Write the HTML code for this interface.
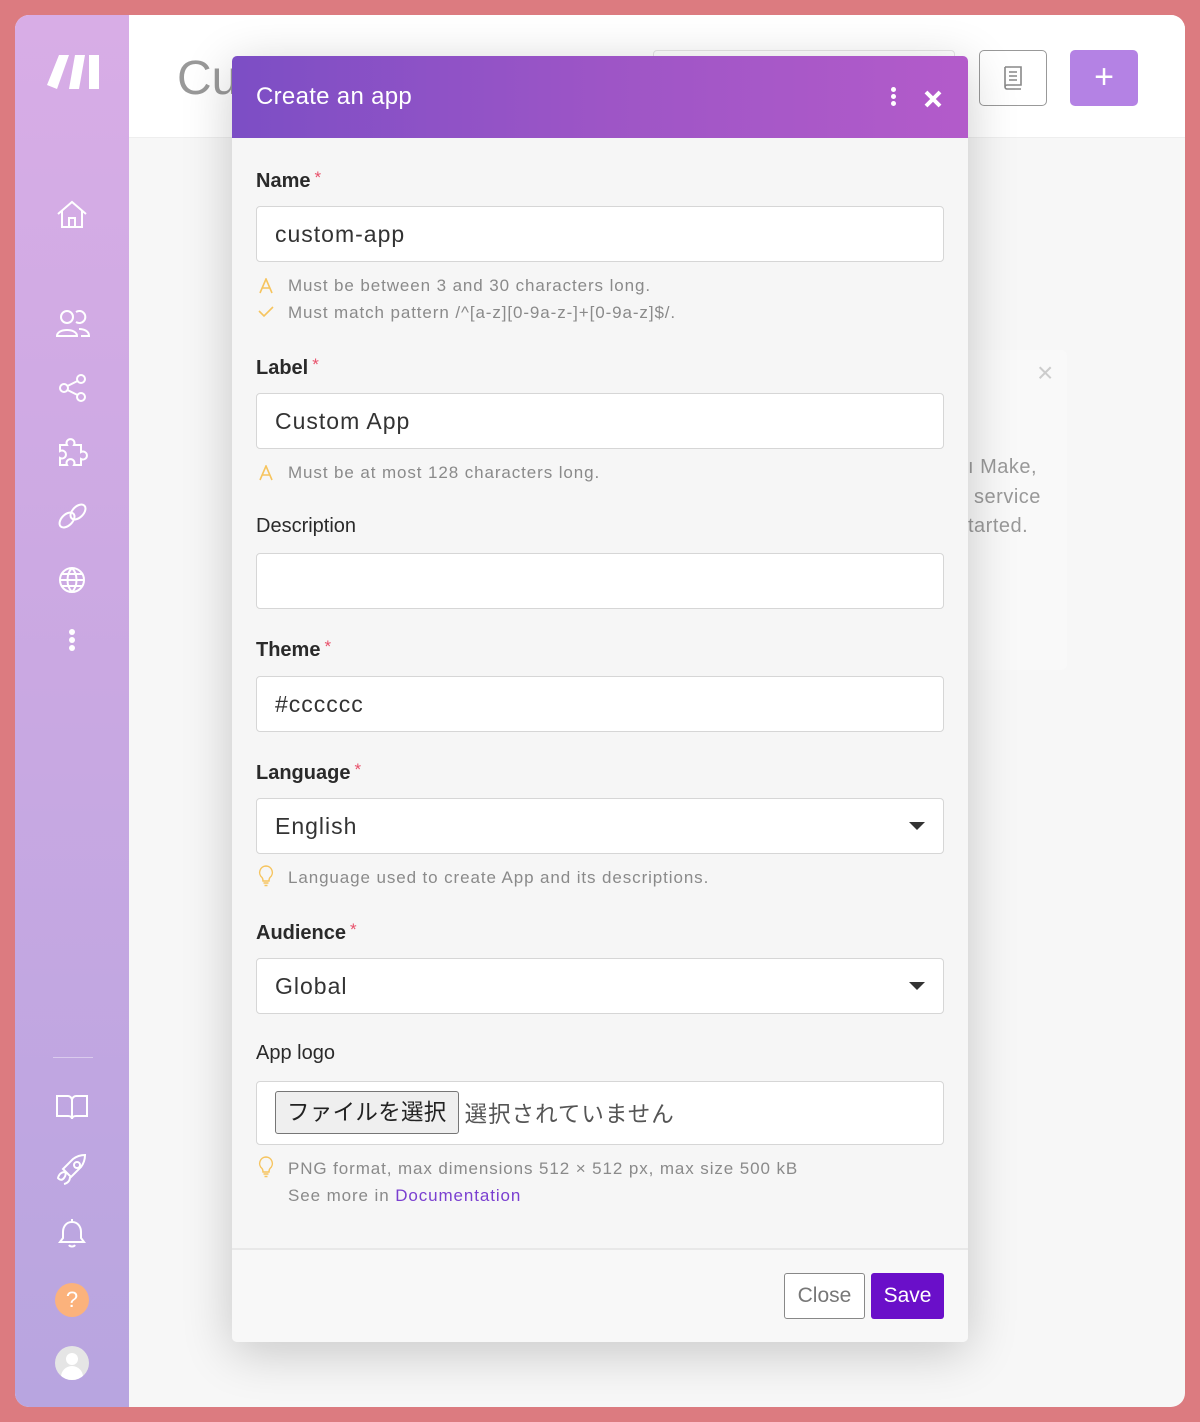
<!DOCTYPE html>
<html><head><meta charset="utf-8"><style>
*{box-sizing:border-box;margin:0;padding:0}
body{width:1200px;height:1422px;background:#dc7b80;font-family:"Liberation Sans","Noto Sans CJK JP",sans-serif;position:relative;overflow:hidden}
.win{position:absolute;left:15px;top:15px;width:1170px;height:1392px;border-radius:14px;overflow:hidden;background:#f7f7f7}
.side{position:absolute;left:0;top:0;width:114px;height:100%;background:linear-gradient(180deg,#d8ade6 0%,#c9a8e2 50%,#b8a5e0 100%)}
.hdr{position:absolute;left:114px;top:0;right:0;height:123px;background:#fff;border-bottom:1px solid #eee}
.ic{position:absolute;left:40px}
.a{position:absolute}
.modal{position:absolute;left:232px;top:56px;width:736px;height:1286px;background:#f6f6f6;border-radius:5px;box-shadow:0 10px 50px rgba(0,0,0,.2);overflow:hidden}
.mh{position:absolute;left:0;top:0;width:100%;height:82px;background:linear-gradient(90deg,#7c4ec5,#9d55c6 50%,#b35bca)}
.lbl{position:absolute;left:24px;font-size:20px;color:#2a2a2a;font-weight:bold}
.lbl.n{font-weight:normal}
.lbl span{color:#e8506a;font-weight:normal;font-size:17px;vertical-align:4px;margin-left:4px}
.inp{position:absolute;left:24px;width:688px;height:56px;background:#fff;border:1px solid #d6d6d6;border-radius:4px;font-size:23px;color:#333;padding-left:18px;line-height:54px;letter-spacing:1px}
.hint{position:absolute;left:56px;font-size:17px;color:#8a8a8a;letter-spacing:.9px}
.hi{position:absolute;left:26px}
.car{position:absolute;right:18px;top:23px;width:0;height:0;border-left:8px solid transparent;border-right:8px solid transparent;border-top:8px solid #333}
</style></head><body>
<div class="win">
 <div class="side">
  <svg class="a" style="left:30px;top:38px" width="56" height="40" viewBox="0 0 56 40"><path d="M14 2h10L12 36 2 32z" fill="#fff"/><path d="M30 2h10l-6 34H24z" fill="#fff"/><path d="M44 2h10v34H44z" fill="#fff"/></svg>
  <svg class="ic" style="top:184px" width="34" height="32" viewBox="0 0 34 32" fill="none" stroke="#fff" stroke-width="2"><path d="M3 15L17 3l14 12M7 12v16h20V12M14 28v-9h6v9"/></svg>
  <svg class="ic" style="top:294px" width="36" height="32" viewBox="0 0 36 32" fill="none" stroke="#fff" stroke-width="2"><circle cx="12" cy="8" r="6"/><path d="M2 27c0-8 20-8 20 0H2z"/><path d="M21 3a6 6 0 1 1 0 10M24 20c5 0 10 2 10 7h-8"/></svg>
  <svg class="ic" style="top:358px" width="34" height="30" viewBox="0 0 34 30" fill="none" stroke="#fff" stroke-width="2"><circle cx="26" cy="6" r="4"/><circle cx="9" cy="15" r="4"/><circle cx="26" cy="24" r="4"/><path d="M12.5 13l10-5M12.5 17l10 5"/></svg>
  <svg class="ic" style="top:420px" width="34" height="34" viewBox="0 0 34 34" fill="none" stroke="#fff" stroke-width="2"><path d="M5 10h7a4 4 0 1 1 7 0h7v7a4 4 0 1 1 0 7v6h-7a4 4 0 1 0-7 0H5v-7a4 4 0 1 0 0-7z"/></svg>
  <svg class="ic" style="top:486px" width="36" height="30" viewBox="0 0 36 30" fill="none" stroke="#fff" stroke-width="2"><ellipse cx="12" cy="19" rx="9" ry="5.5" transform="rotate(-45 12 19)"/><ellipse cx="23" cy="11" rx="9" ry="5.5" transform="rotate(-45 23 11)"/></svg>
  <svg class="ic" style="top:548px" width="34" height="34" viewBox="0 0 34 34" fill="none" stroke="#fff" stroke-width="2"><circle cx="17" cy="17" r="12"/><path d="M5 17h24M17 5c-6 6-6 18 0 24M17 5c6 6 6 18 0 24M7 11h20M7 23h20"/></svg>
  <div class="a" style="left:54px;top:614px;width:6px;height:6px;border-radius:3px;background:#fff;box-shadow:0 8px 0 #fff,0 16px 0 #fff"></div>
  <div class="a" style="left:38px;top:1042px;width:40px;height:1px;background:rgba(255,255,255,.4)"></div>
  <svg class="ic" style="top:1078px" width="34" height="28" viewBox="0 0 34 28" fill="none" stroke="#fff" stroke-width="2"><path d="M2 3h11c2 0 4 2 4 4v19c0-2-2-3-4-3H2zM32 3H21c-2 0-4 2-4 4v19c0-2 2-3 4-3h11z"/></svg>
  <svg class="ic" style="top:1138px" width="34" height="34" viewBox="0 0 34 34" fill="none" stroke="#fff" stroke-width="2"><path d="M12 20l-4-4 10-10c4-3 9-4 12-4 0 3-1 8-4 12L16 24z"/><circle cx="22" cy="12" r="3"/><path d="M10 19c-6 0-7 6-7 6s3 4 6 0 1-6 1-6zM15 24c0 6-6 7-6 7"/></svg>
  <svg class="ic" style="top:1203px" width="34" height="32" viewBox="0 0 34 32" fill="none" stroke="#fff" stroke-width="2"><path d="M17 4c-6 0-9 5-9 10v6l-3 4h24l-3-4v-6c0-5-3-10-9-10zM14 27c1 2 5 2 6 0M17 1v3"/></svg>
  <div class="a" style="left:40px;top:1268px;width:34px;height:34px;border-radius:50%;background:#fbb27c;color:#fff;font-size:22px;text-align:center;line-height:34px">?</div>
  <div class="a" style="left:40px;top:1331px;width:34px;height:34px;border-radius:50%;background:#e5e5e5;overflow:hidden"><div class="a" style="left:11px;top:7px;width:12px;height:12px;border-radius:50%;background:#fff"></div><div class="a" style="left:6px;top:20px;width:22px;height:18px;border-radius:11px 11px 0 0;background:#fff"></div></div>
 </div>
 <div class="hdr">
  <div class="a" style="left:48px;top:36px;font-size:48px;color:#999">Cu</div>
  <div class="a" style="left:524px;top:35px;width:302px;height:56px;border:1px solid #e5e5e5;border-radius:4px"></div>
  <div class="a" style="left:850px;top:35px;width:68px;height:56px;border:1px solid #999;border-radius:5px"></div>
  <svg class="a" style="left:874px;top:50px" width="20" height="26" viewBox="0 0 20 26" fill="none" stroke="#888" stroke-width="1.6"><path d="M2 2h16v18H4a2 2 0 0 0 0 4h14M2 2v20M6 7h8M6 11h8M6 15h8"/></svg>
  <div class="a" style="left:941px;top:35px;width:68px;height:56px;background:#b482e4;border-radius:5px;color:#fff;font-size:34px;text-align:center;line-height:54px;font-weight:300">+</div>
 </div>
 <div class="a" style="left:940px;top:335px;width:112px;height:320px;background:#f9f9f9;border-radius:6px"></div>
 <div class="a" style="left:1022px;top:342px;font-size:28px;color:#ccc">×</div>
</div>
<div class="a" style="left:968px;top:453px;font-size:20px;color:#999;line-height:29.5px;letter-spacing:.5px">ı Make,<br>&nbsp;service<br>tarted.</div>

<div class="modal">
 <div class="mh">
  <div class="a" style="left:24px;top:27px;font-size:24px;color:#fff;letter-spacing:.3px">Create an app</div>
  <div class="a" style="left:659px;top:31px;width:5px;height:5px;border-radius:3px;background:#fff;box-shadow:0 7px 0 #fff,0 14px 0 #fff"></div>
  <svg class="a" style="left:692px;top:34px" width="18" height="18" viewBox="0 0 18 18" stroke="#fff" stroke-width="4"><path d="M2 2l14 14M16 2L2 16"/></svg>
 </div>
 <div class="lbl" style="top:112px">Name<span>*</span></div>
 <div class="inp" style="top:150px">custom-app</div>
 <svg class="hi" style="top:222px" width="16" height="16" viewBox="0 0 16 16" fill="none" stroke="#f6c45e" stroke-width="1.6"><path d="M2 15L8 1l6 14M4.5 10h7"/></svg>
 <div class="hint" style="top:220px">Must be between 3 and 30 characters long.</div>
 <svg class="hi" style="top:250px" width="16" height="12" viewBox="0 0 16 12" fill="none" stroke="#f6c45e" stroke-width="1.6"><path d="M1 5l5 5 9-9"/></svg>
 <div class="hint" style="top:247px">Must match pattern /^[a-z][0-9a-z-]+[0-9a-z]$/.</div>
 <div class="lbl" style="top:299px">Label<span>*</span></div>
 <div class="inp" style="top:337px">Custom App</div>
 <svg class="hi" style="top:409px" width="16" height="16" viewBox="0 0 16 16" fill="none" stroke="#f6c45e" stroke-width="1.6"><path d="M2 15L8 1l6 14M4.5 10h7"/></svg>
 <div class="hint" style="top:407px">Must be at most 128 characters long.</div>
 <div class="lbl n" style="top:459px">Description</div>
 <div class="inp" style="top:497px"></div>
 <div class="lbl" style="top:581px">Theme<span>*</span></div>
 <div class="inp" style="top:620px">#cccccc</div>
 <div class="lbl" style="top:704px">Language<span>*</span></div>
 <div class="inp" style="top:742px">English<div class="car"></div></div>
 <svg class="hi" style="top:809px" width="16" height="22" viewBox="0 0 16 22" fill="none" stroke="#f6c45e" stroke-width="1.4"><path d="M8 1a6.5 6.5 0 0 0-4 11.5c1 1 1 2 1 3.5h6c0-1.5 0-2.5 1-3.5A6.5 6.5 0 0 0 8 1zM5.5 18h5M6.5 20.5h3"/></svg>
 <div class="hint" style="top:812px">Language used to create App and its descriptions.</div>
 <div class="lbl" style="top:864px">Audience<span>*</span></div>
 <div class="inp" style="top:902px">Global<div class="car"></div></div>
 <div class="lbl n" style="top:986px">App logo</div>
 <div class="inp" style="top:1025px;height:64px;padding-left:18px;line-height:62px;letter-spacing:0">
  <span style="display:inline-block;vertical-align:middle;height:43px;line-height:41px;padding:0 11px;border:1px solid #767676;border-radius:3px;background:#efefef;color:#222;font-size:22.5px;letter-spacing:.3px;margin-top:-4px">ファイルを選択</span><span style="vertical-align:middle;font-size:22.5px;letter-spacing:1px;color:#555;margin-left:6px">選択されていません</span>
 </div>
 <svg class="hi" style="top:1100px" width="16" height="22" viewBox="0 0 16 22" fill="none" stroke="#f6c45e" stroke-width="1.4"><path d="M8 1a6.5 6.5 0 0 0-4 11.5c1 1 1 2 1 3.5h6c0-1.5 0-2.5 1-3.5A6.5 6.5 0 0 0 8 1zM5.5 18h5M6.5 20.5h3"/></svg>
 <div class="hint" style="top:1103px">PNG format, max dimensions 512 × 512 px, max size 500 kB</div>
 <div class="hint" style="top:1130px">See more in <span style="color:#7a3fd0">Documentation</span></div>
 <div class="a" style="left:0;top:1192px;width:100%;height:94px;background:#f8f8f8;border-top:2px solid #e8e8e8"></div>
 <div class="a" style="left:552px;top:1217px;width:81px;height:46px;border:1px solid #888;border-radius:3px;background:#fff;color:#777;font-size:21px;text-align:center;line-height:44px">Close</div>
 <div class="a" style="left:639px;top:1217px;width:73px;height:46px;background:#6a0fc9;border-radius:3px;color:#fff;font-size:21px;text-align:center;line-height:46px">Save</div>
</div>
</body></html>
